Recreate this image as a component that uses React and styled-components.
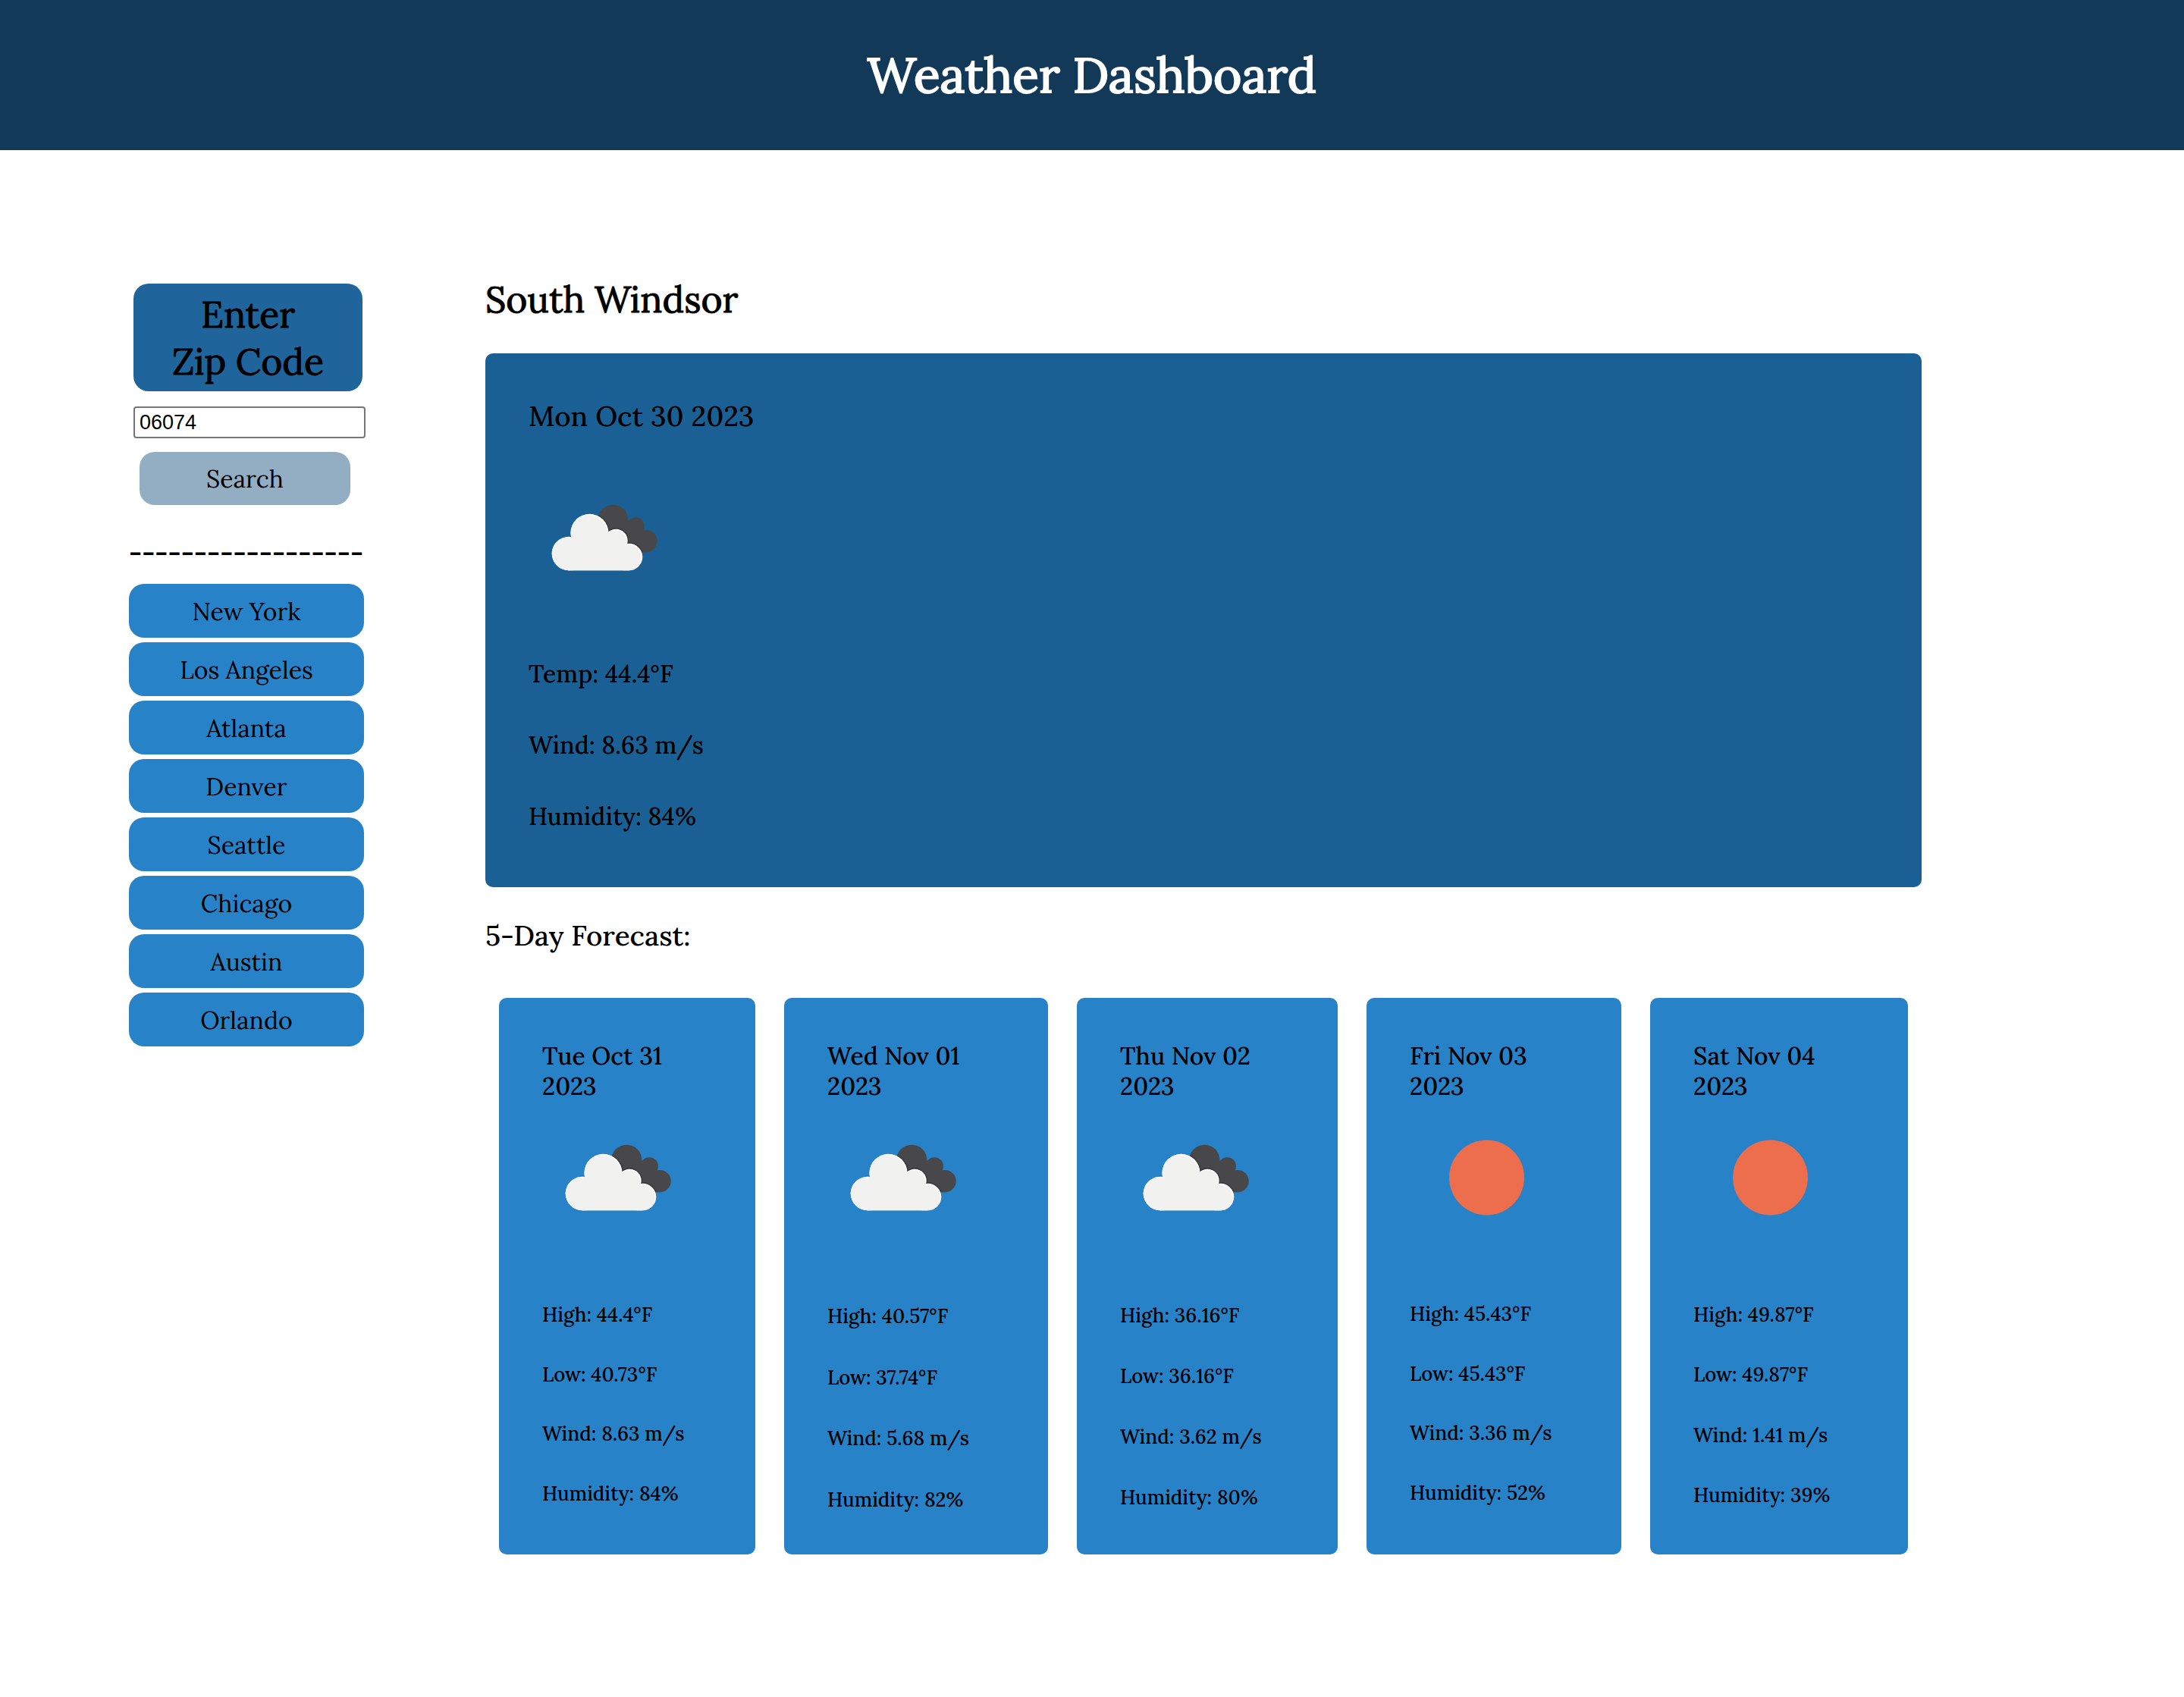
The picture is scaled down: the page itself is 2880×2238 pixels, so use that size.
import React, { useId, useState } from "react";
import styled, { createGlobalStyle } from "styled-components";

const GlobalStyle = createGlobalStyle`
  *, *::before, *::after { box-sizing: border-box; }
  body {
    margin: 0;
    background: #fff;
    color: #000;
    font-family: Lora, "Liberation Serif", serif;
    font-size: 32px;
  }
  h1, h2, h3, p { margin: 0; font-weight: inherit; }
`;

const Header = styled.header`
  display: flex;
  align-items: center;
  justify-content: center;
  padding: 54px 20px;
  background: #133959;
`;

const Title = styled.h1`
  color: #fff;
  font-size: 64px;
  line-height: 90px;
  -webkit-text-stroke: 2px #fff;
`;

const Page = styled.div`
  display: flex;
  align-items: flex-start;
  gap: 158px;
  padding: 165px 346px 165px 170px;
`;

const Sidebar = styled.aside`
  flex: none;
  width: 312px;
  padding-top: 11px;
`;

const SearchForm = styled.form`
  display: flex;
  flex-direction: column;
  padding-left: 6px;
`;

const ZipLabel = styled.label`
  width: 302px;
  padding: 10px 20px 8px;
  border-radius: 20px;
  background: #1f659b;
  font-size: 48px;
  line-height: 62px;
  text-align: center;
  -webkit-text-stroke: 1px #000;
`;

const ZipInput = styled.input`
  width: 306px;
  height: 42px;
  margin: 20px 0 18px;
  padding: 2px 6px;
  border: 2px solid #767676;
  border-radius: 4px;
  background: #fff;
  color: #000;
  font-family: "Liberation Sans", Arial, sans-serif;
  font-size: 27px;
`;

const PillButton = styled.button`
  padding: 2px 12px 0;
  border: 0;
  border-radius: 20px;
  color: #000;
  font-family: inherit;
  font-size: 32px;
  line-height: 40px;
  cursor: pointer;
`;

const SearchButton = styled(PillButton)`
  width: 278px;
  height: 70px;
  margin-left: 8px;
  background: #93adc3;
`;

const CityButton = styled(PillButton)`
  width: 310px;
  height: 71px;
  background: #2782c8;
`;

const Divider = styled.p`
  && { margin: 31px 0 9px; }
  font-size: 36px;
  font-weight: 600;
  line-height: 64px;
  white-space: nowrap;
`;

const CityList = styled.nav`
  display: flex;
  flex-direction: column;
  gap: 6px;
`;

const Main = styled.main`
  flex: 1;
  min-width: 0;
`;

const CityName = styled.h2`
  && { margin-bottom: 39px; }
  font-size: 48px;
  line-height: 64px;
  -webkit-text-stroke: 1px #000;
`;

const Today = styled.section`
  display: flex;
  flex-direction: column;
  align-items: flex-start;
  padding: 57px 57px 70px;
  border-radius: 10px;
  background: #1b6095;
  font-weight: 500;
`;

const TodayDate = styled.h3`
  && { margin-bottom: 34px; }
  font-size: 37px;
  line-height: 52px;
`;

const TodayStats = styled.div`
  display: flex;
  flex-direction: column;
  gap: 48px;
  margin-top: 57px;
  line-height: 46px;
`;

const ForecastTitle = styled.h3`
  && { margin: 37px 0 55px; }
  font-size: 37px;
  font-weight: 500;
  line-height: 54px;
`;

const Forecast = styled.section`
  display: grid;
  grid-template-columns: 338fr 348fr 344fr 336fr 340fr;
  gap: 38px;
  padding: 0 18px;
`;

const DayCard = styled.article`
  min-height: 734px;
  padding: 57px 57px 50px;
  border-radius: 10px;
  background: #2782c8;
  font-weight: 500;
`;

const DayDate = styled.h3`
  font-size: 32px;
  line-height: 40px;
`;

const DayStats = styled.div`
  padding-top: 19px;
  font-size: 26px;
  line-height: 34px;
  white-space: nowrap;
`;

const DayStat = styled.p`
  && { margin-top: 20%; }
`;

const IconBox = styled.svg`
  display: block;
  width: 200px;
  height: 200px;
`;

function WhiteShapes() {
  return (
    <>
      <circle cx="53" cy="121" r="22.3" />
      <circle cx="80.5" cy="93.8" r="25" />
      <circle cx="115.3" cy="104.1" r="15.4" />
      <circle cx="132.5" cy="125.5" r="17.8" />
      <path d="M53 143.3V110L80 95L115 104L132.5 120V143.3Z" />
    </>
  );
}

function DarkShapes() {
  return (
    <>
      <circle cx="111.3" cy="76.7" r="20" />
      <circle cx="141.3" cy="85" r="11.7" />
      <circle cx="155" cy="104.7" r="14.7" />
      <path d="M100 76L131 77L148 92L155 119.3H120Z" />
    </>
  );
}

function CloudIcon() {
  const id = useId();
  return (
    <IconBox viewBox="0 0 200 200" role="img" aria-label="Broken clouds">
      <defs>
        <clipPath id={`${id}-dark`}>
          <DarkShapes />
        </clipPath>
        <clipPath id={`${id}-light`}>
          <WhiteShapes />
        </clipPath>
      </defs>
      <g fill="#48484a">
        <DarkShapes />
      </g>
      <g clipPath={`url(#${id}-dark)`} fill="#39393b" stroke="#39393b" strokeWidth="3">
        <WhiteShapes />
      </g>
      <g fill="#fbfbfb">
        <WhiteShapes />
      </g>
      <g clipPath={`url(#${id}-light)`}>
        <g fill="#f1f1f0" transform="translate(-1.5 1.5)">
          <WhiteShapes />
        </g>
      </g>
    </IconBox>
  );
}

function SunIcon() {
  return (
    <IconBox viewBox="0 0 200 200" role="img" aria-label="Clear sky">
      <circle cx="101.5" cy="100" r="49.5" fill="#ec6e4c" />
    </IconBox>
  );
}

const cities = ["New York", "Los Angeles", "Atlanta", "Denver", "Seattle", "Chicago", "Austin", "Orlando"];

const days = [
  { date: "Tue Oct 31", Icon: CloudIcon, high: "44.4", low: "40.73", wind: "8.63", humidity: 84 },
  { date: "Wed Nov 01", Icon: CloudIcon, high: "40.57", low: "37.74", wind: "5.68", humidity: 82 },
  { date: "Thu Nov 02", Icon: CloudIcon, high: "36.16", low: "36.16", wind: "3.62", humidity: 80 },
  { date: "Fri Nov 03", Icon: SunIcon, high: "45.43", low: "45.43", wind: "3.36", humidity: 52 },
  { date: "Sat Nov 04", Icon: SunIcon, high: "49.87", low: "49.87", wind: "1.41", humidity: 39 },
];

export default function App() {
  const [zip, setZip] = useState("06074");
  return (
    <>
      <GlobalStyle />
      <Header>
        <Title>Weather Dashboard</Title>
      </Header>
      <Page>
        <Sidebar>
          <SearchForm onSubmit={(event) => event.preventDefault()}>
            <ZipLabel htmlFor="zip">
              Enter
              <br />
              Zip Code
            </ZipLabel>
            <ZipInput id="zip" type="text" value={zip} onChange={(event) => setZip(event.target.value)} />
            <SearchButton type="submit">Search</SearchButton>
          </SearchForm>
          <Divider>------------------</Divider>
          <CityList aria-label="Cities">
            {cities.map((city) => (
              <CityButton key={city} type="button">{city}</CityButton>
            ))}
          </CityList>
        </Sidebar>
        <Main>
          <CityName>South Windsor</CityName>
          <Today>
            <TodayDate>Mon Oct 30 2023</TodayDate>
            <CloudIcon />
            <TodayStats>
              <p>Temp: 44.4°F</p>
              <p>Wind: 8.63 m/s</p>
              <p>Humidity: 84%</p>
            </TodayStats>
          </Today>
          <ForecastTitle>5-Day Forecast:</ForecastTitle>
          <Forecast>
            {days.map(({ date, Icon, high, low, wind, humidity }) => (
              <DayCard key={date}>
                <DayDate>
                  {date}
                  <br />
                  2023
                </DayDate>
                <Icon />
                <DayStats>
                  <DayStat>High: {high}°F</DayStat>
                  <DayStat>Low: {low}°F</DayStat>
                  <DayStat>Wind: {wind} m/s</DayStat>
                  <DayStat>Humidity: {humidity}%</DayStat>
                </DayStats>
              </DayCard>
            ))}
          </Forecast>
        </Main>
      </Page>
    </>
  );
}
